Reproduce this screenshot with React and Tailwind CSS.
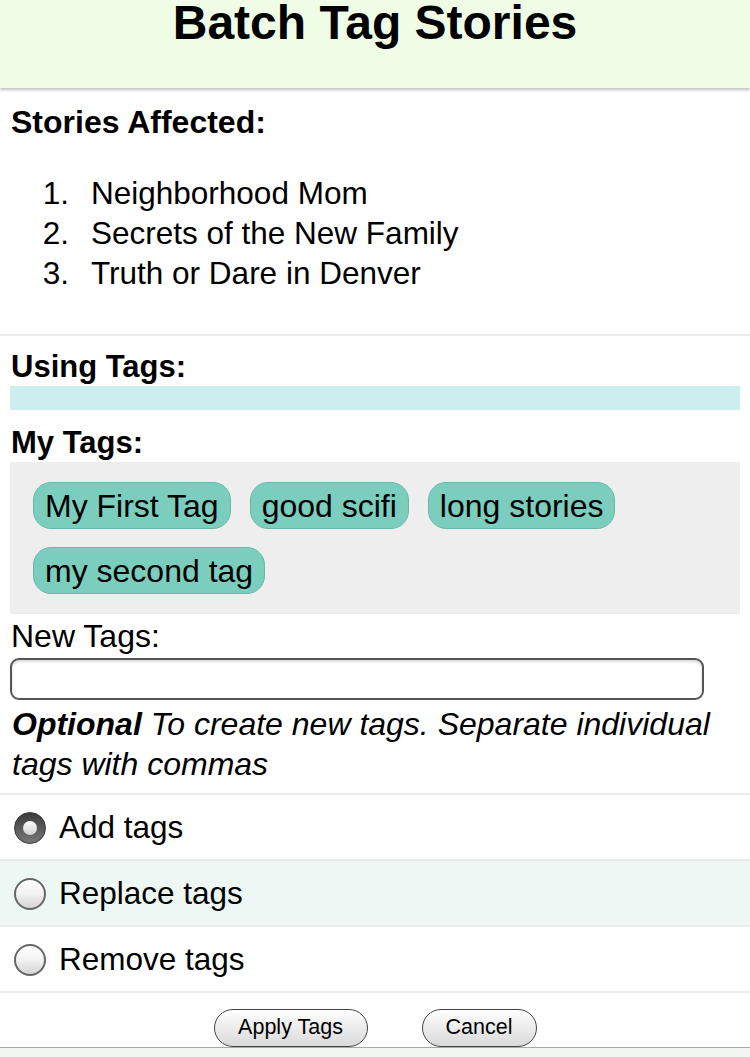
import React from "react";

const stories = [
  "Neighborhood Mom",
  "Secrets of the New Family",
  "Truth or Dare in Denver",
];

const myTags = ["My First Tag", "good scifi", "long stories", "my second tag"];

const modes = [
  { label: "Add tags", checked: true, tint: false },
  { label: "Replace tags", checked: false, tint: true },
  { label: "Remove tags", checked: false, tint: false },
];

function Radio({ checked }) {
  if (checked) {
    return (
      <span className="flex h-[32px] w-[32px] shrink-0 items-center justify-center rounded-full border border-[#333] bg-gradient-to-b from-[#3a3a3a] via-[#5a5a5a] to-[#777]">
        <span className="h-[14px] w-[14px] rounded-full bg-gradient-to-b from-white to-[#cfcfcf]" />
      </span>
    );
  }
  return (
    <span className="h-[32px] w-[32px] shrink-0 rounded-full border-2 border-[#666] bg-gradient-to-b from-white via-[#f2f2f2] to-[#d4d4d4]" />
  );
}

export default function App() {
  return (
    <div className="w-[750px] min-h-[1057px] bg-white font-['Liberation_Sans',Arial,sans-serif] text-black">
      <header className="relative h-[88px] bg-[#effde7] shadow-[0_2px_3px_rgba(0,0,0,0.25)]">
        <h1 className="text-center text-[48px] font-bold leading-[46px]">
          Batch Tag Stories
        </h1>
      </header>

      <section className="px-[11px] pt-[14px] pb-[41px]">
        <h2 className="text-[32px] font-bold leading-[40px]">Stories Affected:</h2>
        <ol className="mt-[31px] text-[31.5px] leading-[40px]">
          {stories.map((s, i) => (
            <li key={s} className="flex">
              <span className="w-[58px] shrink-0 text-right">{i + 1}.</span>
              <span className="ml-[22px]">{s}</span>
            </li>
          ))}
        </ol>
      </section>

      <div className="h-[2px] bg-[#ececec]" />

      <section className="px-[10px] pt-[12px]">
        <h2 className="pl-[1px] text-[31px] font-bold leading-[38px]">Using Tags:</h2>
        <div className="h-[24px] bg-[#cdeeee]" />

        <h2 className="mt-[14px] pl-[1px] text-[31px] font-bold leading-[38px]">My Tags:</h2>
        <div className="flex flex-wrap gap-x-[19px] gap-y-[18px] bg-[#eeeeee] px-[23px] py-[20px]">
          {myTags.map((t) => (
            <span
              key={t}
              className="flex h-[47px] items-center rounded-[18px] border border-[#69b9a9] bg-[#7bcdbd] px-[11px] text-[32px] leading-none"
            >
              {t}
            </span>
          ))}
        </div>

        <label className="mt-[2px] block pl-[1px] text-[32px] leading-[40px]">New Tags:</label>
        <input
          type="text"
          className="mt-[2px] block h-[42px] w-[694px] rounded-[9px] border-2 border-[#555] bg-white shadow-[inset_0_2px_3px_rgba(0,0,0,0.15)] outline-none"
        />
        <p className="mt-[4px] pb-[9px] pl-[2px] pr-[6px] text-[32px] italic leading-[40px]">
          <b>Optional</b> To create new tags. Separate individual tags with commas
        </p>
      </section>

      <div className="h-[2px] bg-[#ececec]" />

      {modes.map((m) => (
        <div key={m.label}>
          <label
            className={
              "flex h-[64px] items-center gap-[13px] pl-[14px] pt-[2px] text-[31.5px] " +
              (m.tint ? "bg-[#edf7f3]" : "bg-white")
            }
          >
            <Radio checked={m.checked} />
            <span>{m.label}</span>
          </label>
          <div className="h-[2px] bg-[#ececec]" />
        </div>
      ))}

      <div className="flex items-start justify-center gap-[54px] pt-[16px]">
        <button className="h-[38px] w-[154px] rounded-full border-[1.5px] border-[#444] bg-gradient-to-b from-white to-[#d9d9d9] text-[21.5px] leading-none">
          Apply Tags
        </button>
        <button className="h-[38px] w-[115px] rounded-full border-[1.5px] border-[#444] bg-gradient-to-b from-white to-[#d9d9d9] text-[21.5px] leading-none">
          Cancel
        </button>
      </div>

      <div className="h-[12px] border-t border-[#a8a8a8] bg-[#f2f5ef]" />
    </div>
  );
}
